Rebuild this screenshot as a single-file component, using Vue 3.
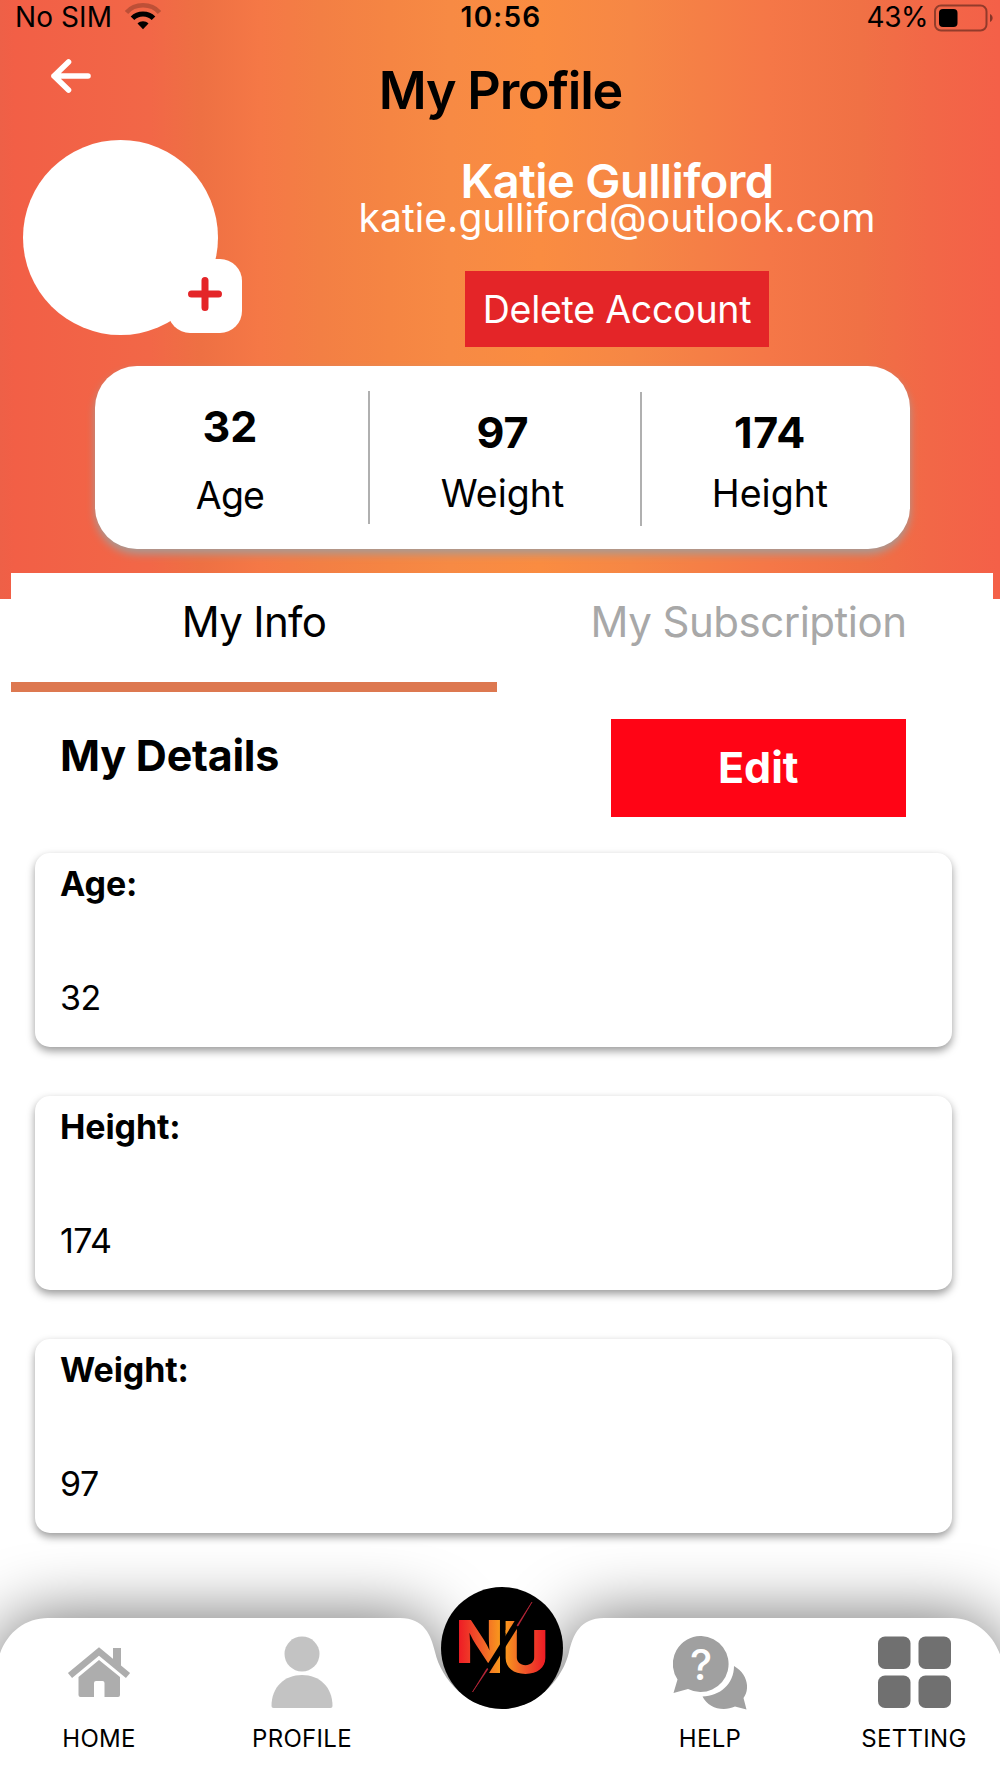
<template>
  <main class="screen">
    <header class="hero">
      <div class="status-bar">
        <div class="carrier">
          <span class="carrier-name">No SIM</span>
          <svg class="wifi" width="36" height="28" viewBox="0 0 36 28">
            <path d="M1.500 10.500C9.500 0.800 26.500 0.800 34.500 10.500" fill="none" stroke="#000" stroke-opacity="0.22" stroke-width="4.500" />
            <path d="M7.500 16.300C13 10.600 23 10.600 28.500 16.300" fill="none" stroke="#000" stroke-width="5" />
            <path d="M18 27.200L12.500 21.500C15.500 18.500 20.500 18.500 23.500 21.500Z" fill="#000" />
          </svg>
        </div>
        <span class="clock">10:56</span>
        <div class="battery">
          <span class="percent">43%</span>
          <svg width="60" height="28" viewBox="0 0 60 28">
            <rect x="1" y="1.500" width="51.500" height="25" rx="6" fill="none" stroke="#000" stroke-opacity="0.4" stroke-width="2" />
            <rect x="5" y="5" width="18.500" height="18" rx="4" fill="#000" />
            <path d="M56 10C59.500 11.500 59.500 16.500 56 18Z" fill="#000" fill-opacity="0.45" />
          </svg>
        </div>
      </div>

      <div class="title-row">
        <button class="back" type="button" aria-label="Back">
          <svg width="42" height="36" viewBox="0 0 42 36">
            <path d="M38 18H4M18.500 4L4 18L18.500 32" fill="none" stroke="#fff" stroke-width="5.600" stroke-linecap="round" stroke-linejoin="round" />
          </svg>
        </button>
        <h1>My Profile</h1>
      </div>

      <div class="profile-row">
        <div class="avatar">
          <button class="avatar-add" type="button" aria-label="Add photo">
            <svg width="34" height="34" viewBox="0 0 34 34">
              <path d="M17 3.500V30.500M3.500 17H30.500" stroke="#e42528" stroke-width="7" stroke-linecap="round" />
            </svg>
          </button>
        </div>
        <div class="account">
          <h2>{{ user.name }}</h2>
          <p class="email">{{ user.email }}</p>
          <button class="delete-button" type="button"><span>Delete Account</span></button>
        </div>
      </div>

      <div class="stats">
        <div v-for="stat in stats" :key="stat.label" :class="['stat', stat.label.toLowerCase()]">
          <strong>{{ stat.value }}</strong>
          <span>{{ stat.label }}</span>
        </div>
      </div>
    </header>

    <section class="panel">
      <nav class="tabs">
        <button v-for="tab in tabs" :key="tab" :class="['tab', { active: tab === activeTab }]" type="button" @click="activeTab = tab">
          <span>{{ tab }}</span>
        </button>
      </nav>

      <div class="details-header">
        <h3>My Details</h3>
        <button class="edit-button" type="button">Edit</button>
      </div>

      <div class="details-list">
        <article v-for="detail in details" :key="detail.label" class="detail-card">
          <strong>{{ detail.label }}:</strong>
          <span>{{ detail.value }}</span>
        </article>
      </div>
    </section>

    <footer class="tab-bar">
      <svg class="tab-bar-shape" width="1000" height="235" viewBox="0 0 1000 235">
        <defs>
          <filter id="bar-shadow" x="-120" y="-80" width="1240" height="440" filterUnits="userSpaceOnUse">
            <feGaussianBlur stdDeviation="34" />
          </filter>
        </defs>
        <path :d="barPath" fill="#000" fill-opacity="0.58" filter="url(#bar-shadow)" />
        <path :d="barPath" fill="#fff" />
      </svg>

      <a class="tab-item home">
        <svg width="64" height="74" viewBox="0 0 64 74">
          <path d="M3 39.500L32 15.500L61 39.500" fill="none" stroke="#adadad" stroke-width="6.500" />
          <path d="M46 12H54V34L46 27Z" fill="#adadad" />
          <path d="M32 24L53 41V59Q53 61 51 61H37.500V47Q37.500 45 35.500 45H29Q27 45 27 47V61H13.500Q11.500 61 11.500 59V41Z" fill="#adadad" />
        </svg>
        <span>HOME</span>
      </a>
      <a class="tab-item profile">
        <svg width="64" height="74" viewBox="0 0 64 74">
          <circle cx="32" cy="18" r="17.500" fill="#c3c3c3" />
          <path d="M1.500 70C1.500 51 14.500 39 32 39S62.500 51 62.500 70Q62.500 72 60.500 72H3.500Q1.500 72 1.500 70Z" fill="#c3c3c3" />
        </svg>
        <span>PROFILE</span>
      </a>
      <a class="brand">
        <svg width="122" height="122" viewBox="0 0 122 122">
          <defs>
            <linearGradient id="n-fill" x1="18" x2="59" gradientUnits="userSpaceOnUse">
              <stop offset="0" stop-color="#ee1c25" />
              <stop offset="0.500" stop-color="#f0562a" />
              <stop offset="1" stop-color="#f8981d" />
            </linearGradient>
            <linearGradient id="u-fill" x1="64" x2="104" gradientUnits="userSpaceOnUse">
              <stop offset="0" stop-color="#f8981d" />
              <stop offset="0.500" stop-color="#f0562a" />
              <stop offset="1" stop-color="#ee1c25" />
            </linearGradient>
          </defs>
          <circle cx="61" cy="61" r="61" fill="#000" />
          <text class="brand-letter" x="14.500" y="76" font-size="59" textLength="48" lengthAdjust="spacingAndGlyphs" fill="url(#n-fill)">N</text>
          <text class="brand-letter" x="61" y="86" font-size="59" textLength="47" lengthAdjust="spacingAndGlyphs" fill="url(#u-fill)">U</text>
          <path d="M46 86L59 67V86Z" fill="url(#n-fill)" />
          <path d="M64.600 34H75.700V46H64.600Z" fill="url(#u-fill)" />
          <path d="M86 20L37 98" stroke="#000" stroke-width="6" />
          <path d="M91 15L76 38.500L77 39ZM31.500 105L47 82L46 81.500Z" fill="#c6283c" stroke="#c6283c" stroke-width="0.600" />
        </svg>
      </a>
      <a class="tab-item help">
        <svg width="74" height="74" viewBox="0 0 74 74">
          <path d="M61 30C75 38 77 53 70.500 62L73.500 73.500L62 70.500C50 76 35 72 29.500 60.500C47 60 61 48 61 30Z" fill="#a0a0a0" />
          <path d="M28.500 0A28 28 0 1 1 15 53L0.500 57L4.500 43.500A28 28 0 0 1 28.500 0Z" fill="#a0a0a0" />
          <text class="help-mark" x="28.300" y="43.500" text-anchor="middle" fill="#fff">?</text>
        </svg>
        <span>HELP</span>
      </a>
      <a class="tab-item setting">
        <svg width="74" height="74" viewBox="0 0 74 74" fill="#707070">
          <rect x="1" y="0.500" width="32.500" height="32.500" rx="7" />
          <rect x="41.500" y="0.500" width="32.500" height="32.500" rx="7" />
          <rect x="1" y="39.500" width="32.500" height="32.500" rx="7" />
          <rect x="41.500" y="39.500" width="32.500" height="32.500" rx="7" />
        </svg>
        <span>SETTING</span>
      </a>
    </footer>
  </main>
</template>

<script setup>
import { ref } from "vue";

const user = { name: "Katie Gulliford", email: "katie.gulliford@outlook.com" };

const stats = [
  { label: "Age", value: 32 },
  { label: "Weight", value: 97 },
  { label: "Height", value: 174 },
];

const details = [
  { label: "Age", value: 32 },
  { label: "Height", value: 174 },
  { label: "Weight", value: 97 },
];

const tabs = ["My Info", "My Subscription"];
const activeTab = ref("My Info");

// white bar with rounded ends and a notch for the round logo
const barPath =
  "M-4 235V135C-4 100 18 75 48 75H400C424 75 431 92 435 109C441 136 468 166 502 166C536 166 563 136 569 109C573 92 580 75 604 75H952C980 75 1004 100 1004 135V235Z";
</script>

<style>
body {
  margin: 0;
  background: #fff;
}
</style>

<style scoped>
.screen {
  display: flex;
  flex-direction: column;
  width: 1000px;
  height: 1778px;
  overflow: hidden;
  background: #fff;
  color: #000;
  font-family: Inter, "Liberation Sans", sans-serif;
}

h1,
h2,
h3,
p {
  margin: 0;
}

button {
  border: 0;
  padding: 0;
  background: transparent;
  color: inherit;
  font: inherit;
}

.hero {
  flex: none;
  height: 599px;
  background: linear-gradient(90deg, #ee6047 0, #f25f46 1.500%, #f26747 15%, #ee7043 20%, #f57846 26%, #f37f44 32%, #f58543 39%, #f78a44 45%, #fa8c41 54%, #f68745 63%, #f57f46 70%, #f57747 77%, #f07145 86%, #f26747 93%, #f46048 100%);
}

.status-bar {
  display: grid;
  grid-template-columns: 1fr auto 1fr;
  align-items: center;
  height: 35px;
  padding: 0 6px;
  font-size: 28px;
  line-height: 35px;
}

.carrier,
.battery {
  display: flex;
  align-items: center;
}

.carrier {
  gap: 13px;
  padding-left: 9px;
}

.carrier-name {
  letter-spacing: 0.1px;
}

.wifi {
  margin-top: -4px;
}

.battery {
  justify-content: flex-end;
  gap: 6px;
}

.percent {
  letter-spacing: -0.5px;
}

.clock {
  padding-left: 2px;
  font-weight: 600;
  letter-spacing: 1.2px;
}

.title-row {
  display: grid;
  grid-template-columns: 1fr auto 1fr;
  height: 105px;
}

.back {
  justify-self: start;
  align-self: start;
  margin: 23px 0 0 50px;
}

.back svg {
  display: block;
}

h1 {
  margin-top: 28px;
  padding-left: 1px;
  font-size: 52px;
  font-weight: 600;
  line-height: 55px;
  letter-spacing: -1.2px;
}

.profile-row {
  display: flex;
  height: 226px;
}

.avatar {
  position: relative;
  width: 195px;
  height: 195px;
  margin-left: 22.5px;
  border-radius: 50%;
  background: #fff;
}

.avatar-add {
  position: absolute;
  right: -24px;
  bottom: 2.5px;
  display: grid;
  place-items: center;
  width: 73.5px;
  height: 73.5px;
  border-radius: 22px;
  background: #fff;
}

.avatar-add svg {
  margin-top: -3px;
}

.account {
  display: flex;
  flex-direction: column;
  align-items: center;
  width: 600px;
  margin-left: 99.5px;
  padding-top: 21px;
  color: #fff;
}

h2 {
  font-size: 47px;
  font-weight: 600;
  line-height: 40px;
  letter-spacing: -0.6px;
}

.email {
  font-size: 39px;
  line-height: 34px;
  letter-spacing: 0.08px;
}

.delete-button {
  width: 304px;
  height: 76px;
  margin-top: 36px;
  background: #e42528;
  font-size: 37.5px;
  letter-spacing: -0.25px;
  white-space: nowrap;
}

.stats {
  display: flex;
  width: 815px;
  height: 183px;
  margin-left: 95px;
  border-radius: 42px;
  background: #fff;
  box-shadow: 0 5px 9px #a89a94;
}

.stat {
  display: flex;
  flex-direction: column;
  align-items: center;
  box-sizing: border-box;
  height: 134px;
  margin-top: 26px;
}

.stat strong {
  font-size: 43px;
  font-weight: 700;
  line-height: 50px;
}

.stat span {
  font-size: 37.5px;
  line-height: 50px;
}

.stat.age {
  width: 275px;
  height: 133px;
  margin-top: 25px;
  padding: 10px 3px 0 0;
  border-right: 2px solid #b0b0b0;
}

.stat.age span {
  margin-top: 20px;
  letter-spacing: -0.8px;
}

.stat.weight {
  width: 272px;
  padding: 15px 5px 0 0;
  border-right: 2px solid #b0b0b0;
}

.stat.height {
  width: 268px;
  padding: 15px 12px 0 0;
}

.stat.height strong {
  letter-spacing: 0.6px;
}

.stat.weight span,
.stat.height span {
  margin-top: 12px;
}

.panel {
  position: relative;
  flex: none;
  box-sizing: border-box;
  width: 982px;
  height: 970px;
  margin: -26px 0 0 11px;
  background: #fff;
}

.tabs {
  display: flex;
}

.tab {
  width: 496px;
  height: 119px;
  box-sizing: border-box;
  border-bottom: 10px solid transparent;
  color: #a8a8a8;
  font-size: 42px;
  line-height: 50px;
  letter-spacing: -0.5px;
  padding: 0 0 11px 7px;
}

.tab.active {
  width: 486px;
  padding-left: 0;
  border-bottom-color: #dd7850;
  color: #000;
  letter-spacing: -0.65px;
}

.details-header {
  display: flex;
  justify-content: space-between;
  align-items: flex-start;
  margin-top: 27px;
  padding: 0 87.5px 0 49px;
}

h3 {
  margin-top: 10px;
  font-size: 43px;
  font-weight: 700;
  line-height: 52px;
  letter-spacing: -0.25px;
}

.edit-button {
  width: 294.5px;
  height: 97.5px;
  padding-bottom: 2px;
  background: #ff0415;
  color: #fff;
  font-size: 43px;
  font-weight: 700;
}

.details-list {
  display: flex;
  flex-direction: column;
  gap: 48.5px;
  margin-top: 36px;
  padding: 0 41px 0 24px;
}

.detail-card {
  display: flex;
  flex-direction: column;
  box-sizing: border-box;
  height: 194.5px;
  padding: 11px 25px;
  border-radius: 15px;
  background: #fff;
  box-shadow: 0 4px 8px rgba(0, 0, 0, 0.4);
  font-size: 34px;
  line-height: 40px;
}

.detail-card strong {
  font-weight: 700;
  letter-spacing: -0.1px;
}

.detail-card span {
  margin-top: 74px;
  letter-spacing: -0.5px;
}

.tab-bar {
  position: relative;
  display: flex;
  flex: none;
  height: 235px;
  overflow: hidden;
}

.tab-bar-shape {
  position: absolute;
  inset: 0;
}

.tab-item {
  position: relative;
  display: flex;
  flex: none;
  flex-direction: column;
  align-items: center;
  gap: 15px;
  width: 204px;
  padding-top: 93px;
  font-size: 24px;
  line-height: 27px;
  letter-spacing: 0.3px;
}

.tab-item.home {
  width: 198px;
}

.tab-item.profile {
  width: 208px;
}

.brand {
  position: relative;
  flex: none;
  width: 122px;
  padding: 44px 45.5px 0 34.5px;
}

.brand svg {
  display: block;
}

.brand-letter {
  font-family: Inter, "Liberation Sans", sans-serif;
  font-weight: 800;
}

.help-mark {
  font-family: Inter, "Liberation Sans", sans-serif;
  font-size: 42px;
  font-weight: 500;
}
</style>
